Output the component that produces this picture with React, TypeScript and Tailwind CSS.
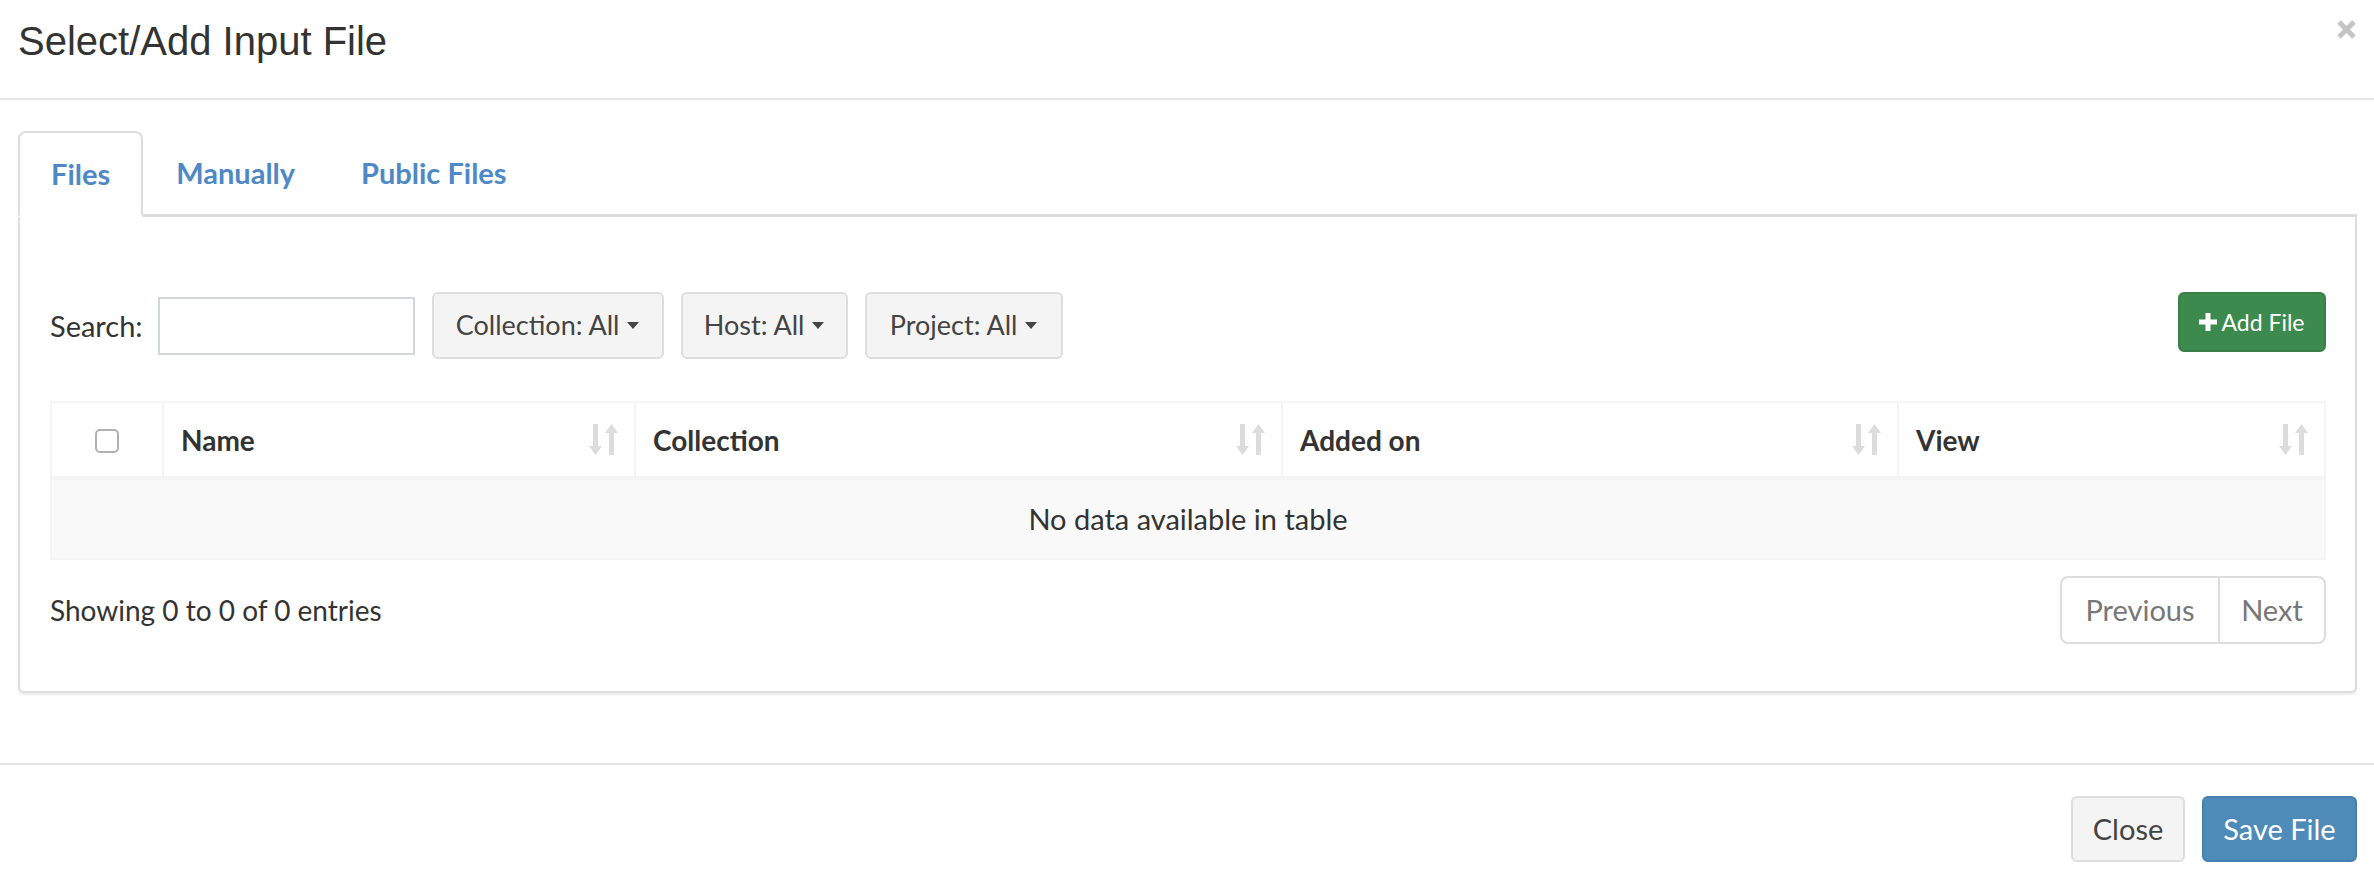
import React from "react";

const SortIcon = () => (
  <svg width="29" height="31" viewBox="0 0 29 31" className="shrink-0">
    <path d="M4 0h5v22h4l-6.5 9L0 22h4z" fill="#dcdcdc" />
    <path d="M22.5 0L29 9h-4v22h-5V9h-4z" fill="#dcdcdc" />
  </svg>
);

const Caret = () => (
  <span className="ml-[8px] inline-block h-0 w-0 border-x-[6px] border-t-[7px] border-x-transparent border-t-[#444]" />
);

const FilterButton = ({ label, width }: { label: string; width: string }) => (
  <button
    className={`ml-[17px] flex h-[67px] items-center justify-center rounded-[6px] border-2 border-[#ddd] bg-[#f4f4f4] text-[27px] text-[#444] ${width}`}
  >
    {label}
    <Caret />
  </button>
);

const columns = [
  { title: "", width: "w-[112px]" },
  { title: "Name", width: "w-[472px]" },
  { title: "Collection", width: "w-[647px]" },
  { title: "Added on", width: "w-[616px]" },
  { title: "View", width: "flex-1" },
];

export default function App() {
  return (
    <div className="min-h-[882px] w-full bg-white font-['Lato',sans-serif] text-[#333]">
      {/* modal header */}
      <div className="flex h-[100px] items-start justify-between border-b-2 border-[#e5e5e5] pl-[18px] pr-[18px]">
        <h4 className="flex h-[82px] items-center font-['Liberation_Sans',Arial,sans-serif] text-[40px] leading-none text-[#333]">
          Select/Add Input File
        </h4>
        <svg width="19" height="19" viewBox="0 0 19 19" className="mt-[20px]">
          <path d="M2 2L17 17M17 2L2 17" stroke="#c4c4c4" strokeWidth="5" />
        </svg>
      </div>

      {/* modal body */}
      <div className="pl-[18px] pr-[17px] pt-[31px]">
        <div className="flex border-b-[3px] border-[#ddd]">
          <div className="-mb-[3px] flex h-[86px] items-center rounded-t-[8px] border-2 border-b-[3px] border-[#ddd] border-b-white bg-white px-[31px] text-[29px] font-bold text-[#4e89c6]">
            Files
          </div>
          <div className="flex h-[83px] items-center border-2 border-transparent px-[31px] text-[29px] font-bold text-[#4e89c6]">
            Manually
          </div>
          <div className="flex h-[83px] items-center border-2 border-transparent px-[31px] text-[29px] font-bold text-[#4e89c6]">
            Public Files
          </div>
        </div>

        <div className="rounded-b-[6px] border-2 border-t-0 border-[#ddd] pb-[47px] pl-[30px] pr-[29px] pt-[75px] shadow-[0_2px_2px_rgba(0,0,0,0.08)]">
          {/* toolbar */}
          <div className="flex h-[67px] items-center">
            <label className="text-[29px] text-[#333]">Search:</label>
            <input className="ml-[15px] h-[58px] w-[257px] border-2 border-[#d2d6de] bg-white outline-none" />
            <FilterButton label="Collection: All" width="w-[232px]" />
            <FilterButton label="Host: All" width="w-[167px]" />
            <FilterButton label="Project: All" width="w-[198px]" />
            <button className="ml-auto flex h-[60px] w-[148px] items-center justify-center self-start rounded-[6px] border-2 border-[#387f48] bg-[#3d8a4f] text-[23px] text-white">
              <svg width="18" height="18" viewBox="0 0 18 18" className="mr-[4px]">
                <path d="M6.5 0h5v6.5H18v5h-6.5V18h-5v-6.5H0v-5h6.5z" fill="#fff" />
              </svg>
              Add File
            </button>
          </div>

          {/* table */}
          <div className="mt-[42px] border-2 border-[#f4f4f4]">
            <div className="flex h-[77px] border-b-[4px] border-[#f4f4f4]">
              {columns.map((col, i) => (
                <div
                  key={i}
                  className={`flex items-center ${col.width} ${i < columns.length - 1 ? "border-r-2 border-[#f4f4f4]" : ""} ${i === 0 ? "justify-center" : "justify-between pl-[17px] pr-[16px]"}`}
                >
                  {i === 0 ? (
                    <span className="mt-[2px] block h-[24px] w-[24px] rounded-[5px] border-2 border-[#b0b0b0] bg-white" />
                  ) : (
                    <>
                      <span className="text-[28px] font-bold text-[#333]">{col.title}</span>
                      <SortIcon />
                    </>
                  )}
                </div>
              ))}
            </div>
            <div className="flex h-[78px] items-center justify-center bg-[#f9f9f9] text-[29px] text-[#333]">
              No data available in table
            </div>
          </div>

          {/* info + pagination */}
          <div className="mt-[16px] flex items-center justify-between">
            <div className="text-[28px] text-[#333]">Showing 0 to 0 of 0 entries</div>
            <div className="flex h-[68px] overflow-hidden rounded-[8px] border-2 border-[#ddd] text-[29px] text-[#777]">
              <span className="flex w-[158px] items-center justify-center border-r-2 border-[#ddd]">Previous</span>
              <span className="flex w-[104px] items-center justify-center">Next</span>
            </div>
          </div>
        </div>
      </div>

      {/* modal footer */}
      <div className="mt-[70px] flex justify-end gap-[17px] border-t-2 border-[#e5e5e5] pb-[21px] pr-[17px] pt-[31px]">
        <button className="h-[66px] w-[114px] rounded-[6px] border-2 border-[#ddd] bg-[#f4f4f4] text-[29px] text-[#444]">
          Close
        </button>
        <button className="h-[66px] w-[155px] rounded-[6px] border-2 border-[#4580ad] bg-[#4f8bb8] text-[29px] text-white">
          Save File
        </button>
      </div>
    </div>
  );
}
